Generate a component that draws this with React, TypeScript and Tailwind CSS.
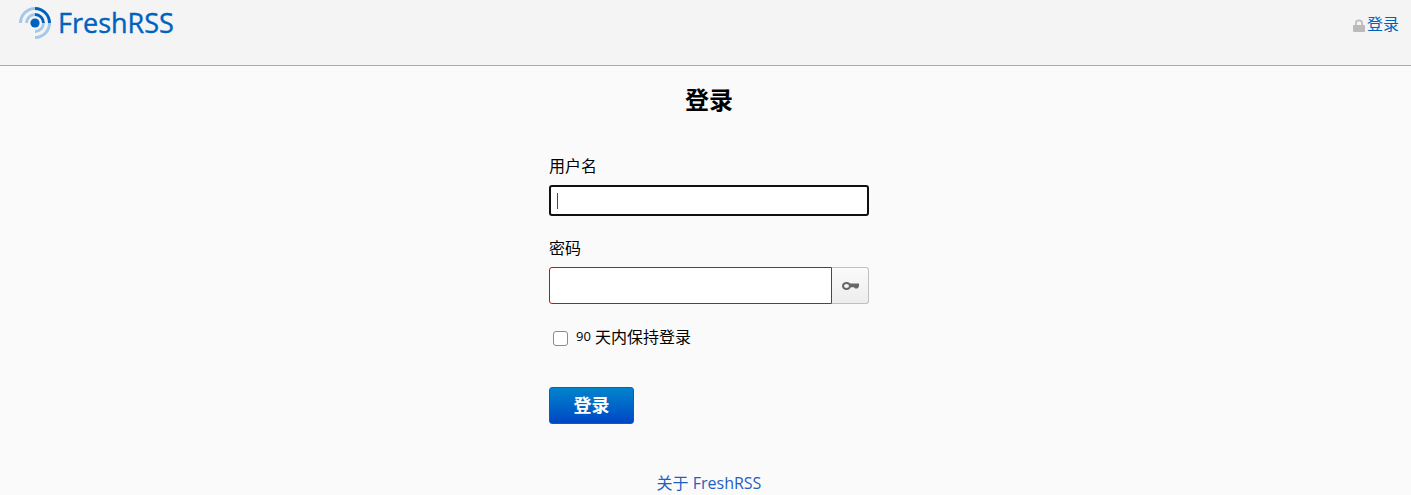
// @ts-nocheck
const font = "font-['Open_Sans','Noto_Sans','Noto_Sans_CJK_SC',sans-serif]";

function Logo() {
  return (
    <svg width="34" height="34" viewBox="0 0 34 34" fill="none" className="shrink-0">
      <circle cx="17" cy="17" r="4.600" fill="#0062be" />
      <path d="M17 8.500a8.500 8.500 0 0 0-8.500 8.500" stroke="#a5c8e8" strokeWidth="2.800" />
      <path d="M17 8.500a8.500 8.500 0 0 1 8.500 8.500" stroke="#0062be" strokeWidth="2.800" />
      <path d="M25.500 17a8.500 8.500 0 0 1-8.500 8.500" stroke="#a5c8e8" strokeWidth="2.800" />
      <path d="M17 2.500a14.500 14.500 0 0 0-14.500 14.500" stroke="#a5c8e8" strokeWidth="3" />
      <path d="M17 2.500a14.500 14.500 0 0 1 14.500 14.500" stroke="#0062be" strokeWidth="3" />
      <path d="M31.500 17a14.500 14.500 0 0 1-14.500 14.500" stroke="#a5c8e8" strokeWidth="3" />
    </svg>
  );
}

export default function App() {
  return (
    <div className={`h-[495px] overflow-hidden bg-[#fafafa] text-[16px] text-black ${font}`}>
      {/* Header */}
      <div className="flex h-[66px] items-start justify-between border-b border-[#aaaaaa] bg-[#f4f4f4] pl-[18px] pr-[12px]">
        <div className="flex items-center gap-[6px] pt-[6px]">
          <Logo />
          <span className="text-[27px] leading-[34px] text-[#0062be] [-webkit-text-stroke:0.4px_#0062be]">FreshRSS</span>
        </div>
        <div className="flex items-center gap-[2px] pt-[14px] leading-5 text-[#0062be]">
          <svg width="12" height="13" viewBox="0 0 12 13" className="mt-[2px]">
            <path d="M2 6V4.500a4 4 0 0 1 8 0V6H8.300V4.500a2.300 2.300 0 0 0-4.600 0V6z" fill="#bbbbbb" />
            <rect x="0" y="6" width="12" height="7" rx="1" fill="#bbbbbb" />
          </svg>
          <a>登录</a>
        </div>
      </div>

      {/* Login form */}
      <div className="ml-[549px] flex w-[320px] flex-col">
        <h1 className="mt-[16px] text-center text-[24px] font-bold leading-[36px]">登录</h1>

        <label className="mt-[36px] leading-[24px]">用户名</label>
        <div className="mt-[7px] flex h-[31px] items-center rounded-[3px] border-2 border-[#101010] bg-white pl-[6px]">
          <div className="h-[16px] w-px bg-[#1f4f8f]" />
        </div>

        <label className="mt-[20px] leading-[24px]">密码</label>
        <div className="mt-[7px] flex h-[37px]">
          <div className="flex-1 rounded-l-[3px] border border-[#f00000] bg-white" />
          <button className="flex w-[37px] items-center justify-center rounded-r-[3px] border border-l-0 border-[#c0c0c0] bg-gradient-to-b from-[#fafafa] to-[#ededed]">
            <svg width="17" height="10" viewBox="0 0 17 10" fill="none">
              <ellipse cx="4.500" cy="5" rx="3.500" ry="3" stroke="#666666" strokeWidth="2" />
              <path d="M7.500 2.500H17V5.500L15.500 7.500H13L12 6.300H7.500z" fill="#666666" />
            </svg>
          </button>
        </div>

        <label className="mt-[21px] flex h-[24px] items-center pl-[4px]">
          <span className="mt-[2px] h-[15px] w-[15px] rounded-[3px] border border-[#8a8a8a] bg-white" />
          <span className="ml-[8px] text-[13px]">90</span>
          <span className="ml-[4px]">天内保持登录</span>
        </label>

        <button className="mt-[38px] h-[37px] w-[85px] rounded-[3px] border border-[#0062be] bg-gradient-to-b from-[#0084cc] to-[#0045c4] text-[18px] font-bold text-white">
          登录
        </button>

        <a className="mt-[47px] text-center leading-[24px] text-[#1f5fbf]">关于 FreshRSS</a>
      </div>
    </div>
  );
}
